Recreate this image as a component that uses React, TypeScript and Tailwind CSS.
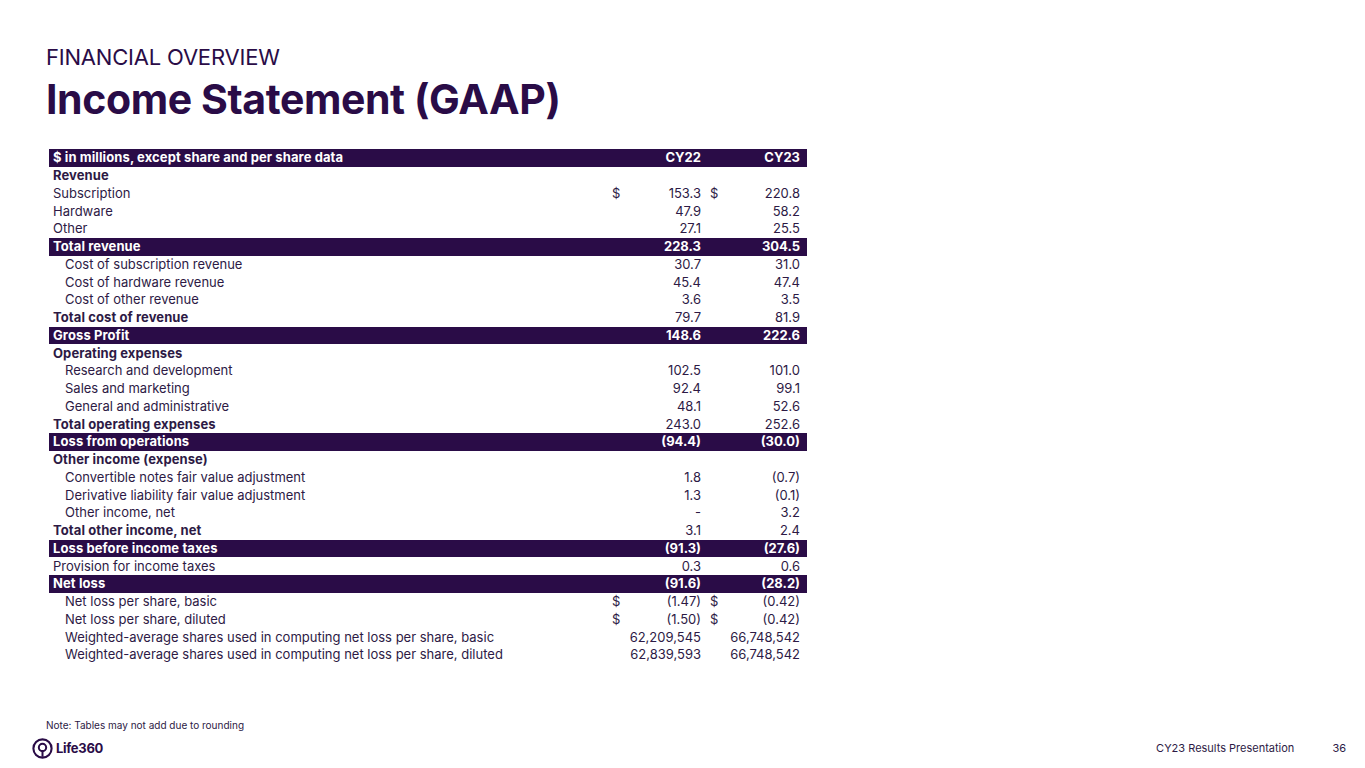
import React from "react";

type Row = {
  label: string;
  kind: "bar" | "bold" | "plain" | "indent";
  d1?: boolean;
  v1?: string;
  d2?: boolean;
  v2?: string;
};

const rows: Row[] = [
  { label: "$ in millions, except share and per share data", kind: "bar", v1: "CY22", v2: "CY23" },
  { label: "Revenue", kind: "bold" },
  { label: "Subscription", kind: "plain", d1: true, v1: "153.3", d2: true, v2: "220.8" },
  { label: "Hardware", kind: "plain", v1: "47.9", v2: "58.2" },
  { label: "Other", kind: "plain", v1: "27.1", v2: "25.5" },
  { label: "Total revenue", kind: "bar", v1: "228.3", v2: "304.5" },
  { label: "Cost of subscription revenue", kind: "indent", v1: "30.7", v2: "31.0" },
  { label: "Cost of hardware revenue", kind: "indent", v1: "45.4", v2: "47.4" },
  { label: "Cost of other revenue", kind: "indent", v1: "3.6", v2: "3.5" },
  { label: "Total cost of revenue", kind: "bold", v1: "79.7", v2: "81.9" },
  { label: "Gross Profit", kind: "bar", v1: "148.6", v2: "222.6" },
  { label: "Operating expenses", kind: "bold" },
  { label: "Research and development", kind: "indent", v1: "102.5", v2: "101.0" },
  { label: "Sales and marketing", kind: "indent", v1: "92.4", v2: "99.1" },
  { label: "General and administrative", kind: "indent", v1: "48.1", v2: "52.6" },
  { label: "Total operating expenses", kind: "bold", v1: "243.0", v2: "252.6" },
  { label: "Loss from operations", kind: "bar", v1: "(94.4)", v2: "(30.0)" },
  { label: "Other income (expense)", kind: "bold" },
  { label: "Convertible notes fair value adjustment", kind: "indent", v1: "1.8", v2: "(0.7)" },
  { label: "Derivative liability fair value adjustment", kind: "indent", v1: "1.3", v2: "(0.1)" },
  { label: "Other income, net", kind: "indent", v1: "-", v2: "3.2" },
  { label: "Total other income, net", kind: "bold", v1: "3.1", v2: "2.4" },
  { label: "Loss before income taxes", kind: "bar", v1: "(91.3)", v2: "(27.6)" },
  { label: "Provision for income taxes", kind: "plain", v1: "0.3", v2: "0.6" },
  { label: "Net loss", kind: "bar", v1: "(91.6)", v2: "(28.2)" },
  { label: "Net loss per share, basic", kind: "indent", d1: true, v1: "(1.47)", d2: true, v2: "(0.42)" },
  { label: "Net loss per share, diluted", kind: "indent", d1: true, v1: "(1.50)", d2: true, v2: "(0.42)" },
  { label: "Weighted-average shares used in computing net loss per share, basic", kind: "indent", v1: "62,209,545", v2: "66,748,542" },
  { label: "Weighted-average shares used in computing net loss per share, diluted", kind: "indent", v1: "62,839,593", v2: "66,748,542" },
];

function TableRow({ r }: { r: Row }) {
  const bar = r.kind === "bar";
  const boldLabel = bar || r.kind === "bold";
  const valCls = bar ? "font-bold" : "font-normal";
  return (
    <div
      className={`grid grid-cols-[561px_12px_79px_19px_80px_7px] h-[17.75px] items-center leading-none ${
        bar ? "bg-[#2a0c47] text-white" : "text-[#2d1a45]"
      }`}
    >
      <div
        className={`${r.kind === "indent" ? "pl-[16px]" : "pl-[4px]"} whitespace-nowrap ${
          boldLabel ? "font-bold tracking-[0.1px]" : "font-normal"
        }`}
      >
        {r.label}
      </div>
      <div className="pl-[2px]">{r.d1 ? "$" : ""}</div>
      <div className={`text-right ${valCls}`}>{r.v1 ?? ""}</div>
      <div className="pl-[9px]">{r.d2 ? "$" : ""}</div>
      <div className={`text-right ${valCls}`}>{r.v2 ?? ""}</div>
      <div />
    </div>
  );
}

function Logo() {
  return (
    <div className="flex items-center gap-[3px]">
      <svg width="21" height="21" viewBox="0 0 24 24" fill="none">
        <circle cx="12" cy="12" r="10.4" stroke="#2a0c47" strokeWidth="2.4" />
        <circle cx="12" cy="10.8" r="4.2" stroke="#2a0c47" strokeWidth="2.3" />
        <path d="M12 15 L 12 21.5" stroke="#2a0c47" strokeWidth="2.3" />
      </svg>
      <span className="text-[13px] font-bold text-[#2a0c47] tracking-[-0.3px]">Life360</span>
    </div>
  );
}

export default function App() {
  return (
    <div
      className="w-[1365px] h-[768px] bg-white flex flex-col overflow-hidden"
      style={{ fontFamily: "Inter, 'Noto Sans', sans-serif" }}
    >
      <div className="pl-[46px] pt-[44px]">
        <div className="text-[22px] leading-[27px] text-[#2a0c47] tracking-[-0.2px]">FINANCIAL OVERVIEW</div>
        <div className="text-[41px] leading-[48px] font-bold text-[#2a0c47] tracking-[-0.4px] mt-[4px]">
          Income Statement (GAAP)
        </div>
      </div>
      <div className="pl-[49px] mt-[26px] text-[13px]">
        <div className="w-[758px]">
          {rows.map((r, i) => (
            <TableRow key={i} r={r} />
          ))}
        </div>
      </div>
      <div className="flex-1" />
      <div className="pl-[46px] text-[10px] text-[#2d1a45] leading-none mb-[8px]">Note: Tables may not add due to rounding</div>
      <div className="flex items-center justify-between pl-[32px] pr-[19px] pb-[9px]">
        <Logo />
        <div className="flex items-center text-[11px] text-[#2d1a45]">
          <span>CY23 Results Presentation</span>
          <span className="ml-[38px]">36</span>
        </div>
      </div>
    </div>
  );
}
